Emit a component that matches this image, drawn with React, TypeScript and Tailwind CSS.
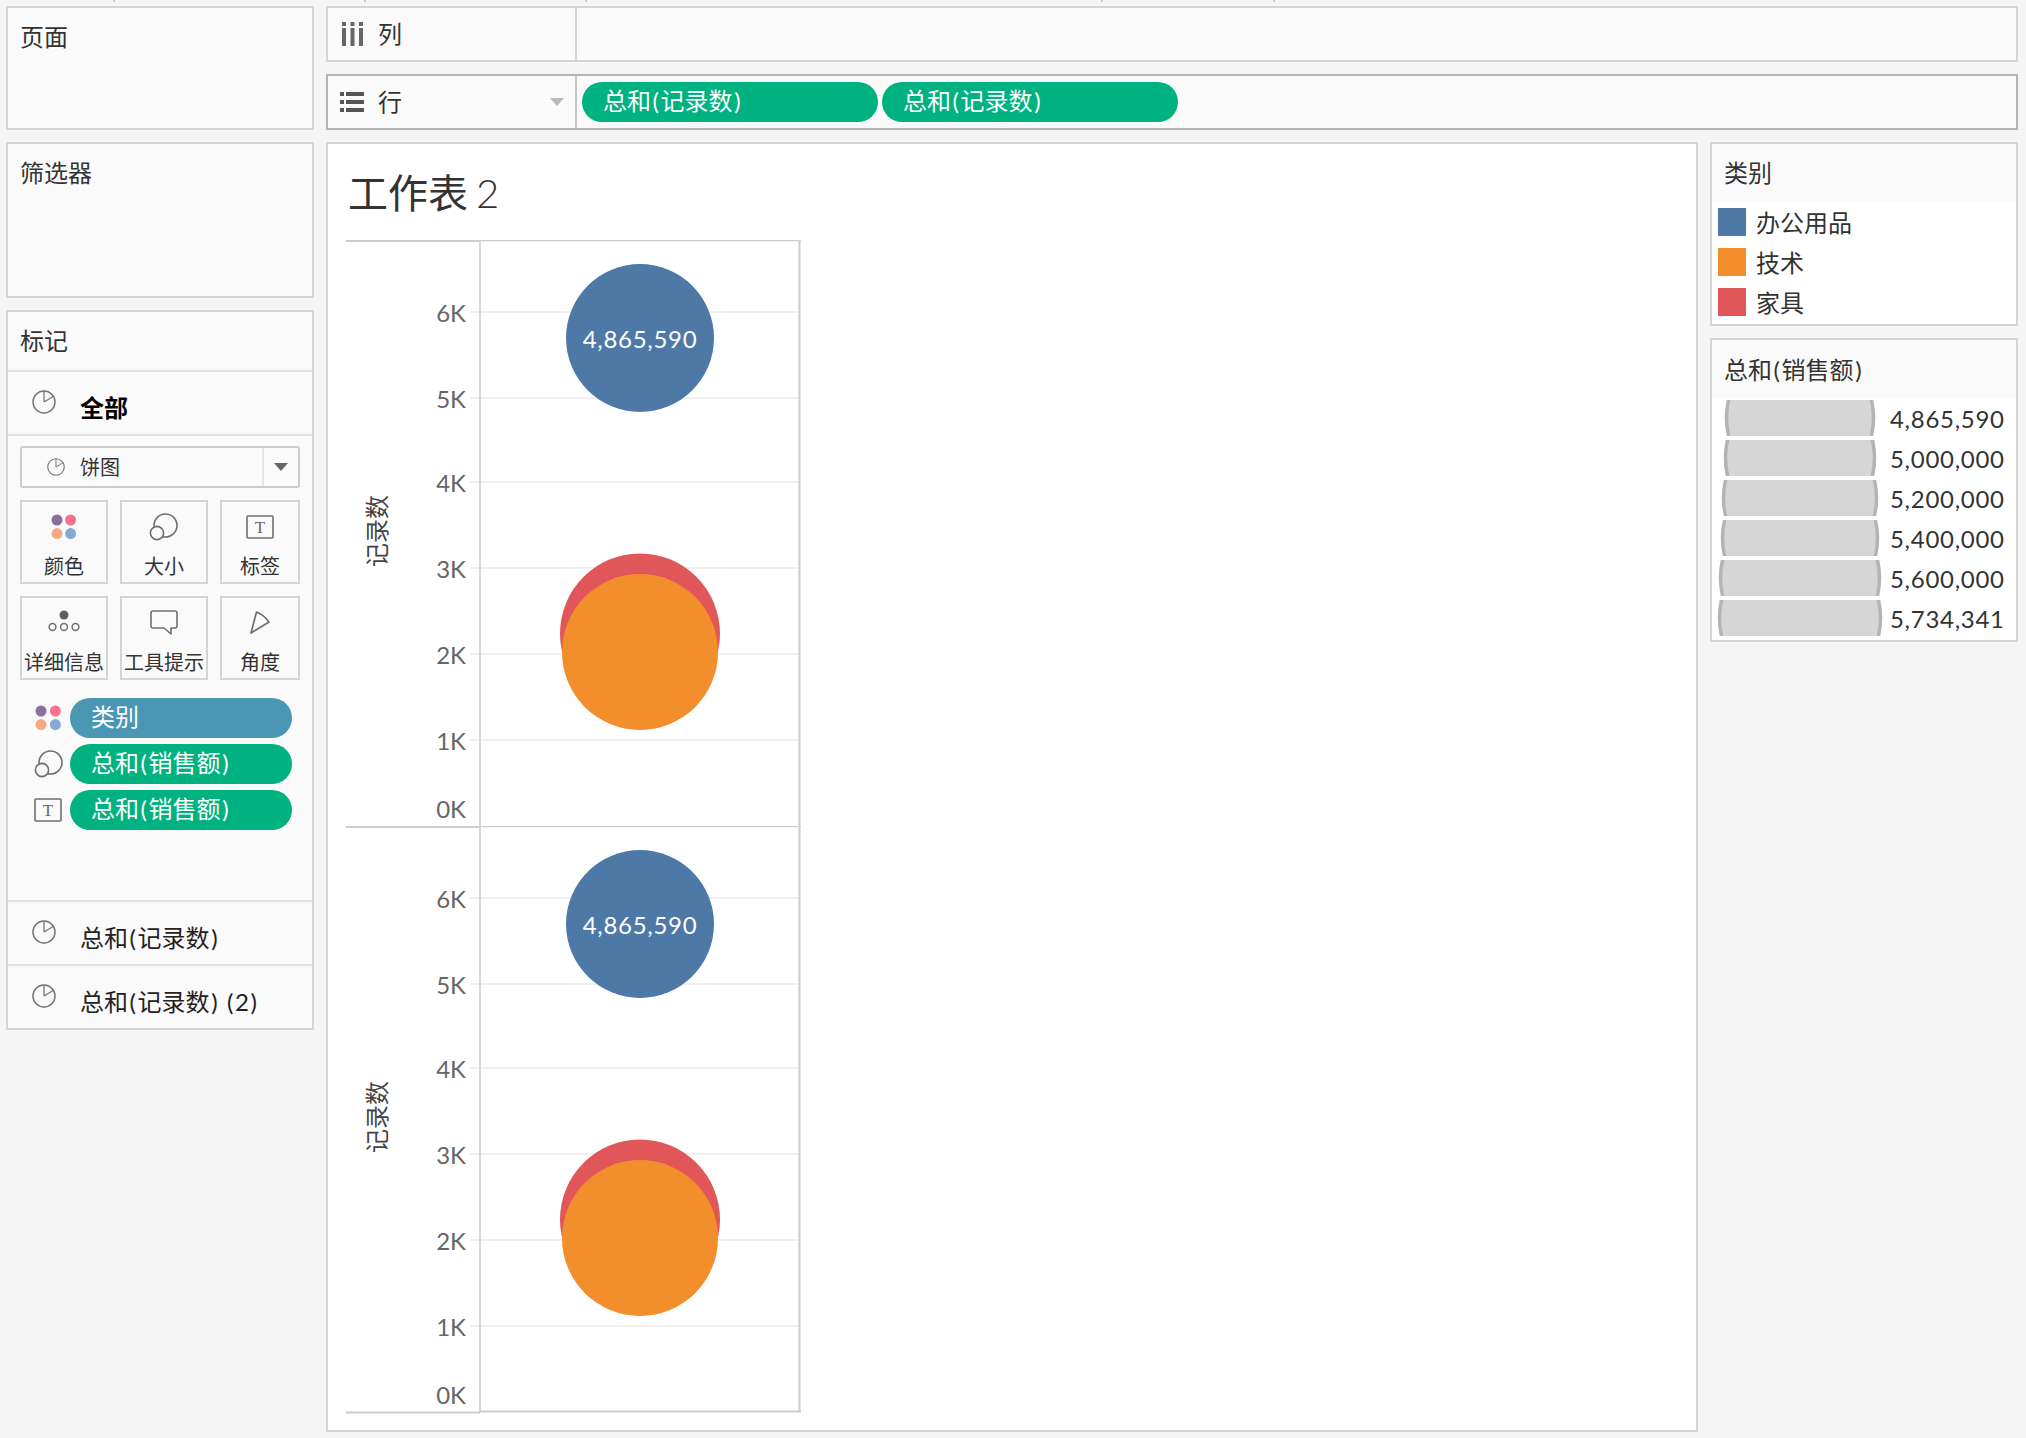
import React from "react";

const FONT = "font-['Lato','Noto_Sans_CJK_SC',sans-serif]";

function Parens({ text }: { text: string }) {
  const parts = text.split(/([()])/);
  return (
    <>
      {parts.map((p, i) =>
        p === "(" || p === ")" ? (
          <span key={i} className="px-[1.6px]">{p}</span>
        ) : (
          <React.Fragment key={i}>{p}</React.Fragment>
        )
      )}
    </>
  );
}

function Pie({ size = 24 }: { size?: number }) {
  return (
    <svg width={size} height={size} viewBox="0 0 24 24" className="shrink-0">
      <circle cx="12" cy="12" r="11" fill="none" stroke="#777" strokeWidth="1.5" />
      <path d="M12 12 L12 1 M12 12 L22 6" fill="none" stroke="#777" strokeWidth="1.3" />
    </svg>
  );
}

function ColorDots({ gap = 13.6 }: { gap?: number }) {
  return (
    <svg width="28" height="26" viewBox="0 0 28 26" className="shrink-0">
      <circle cx="7" cy="6" r="5.5" fill="#8a6f9e" />
      <circle cx={7 + gap} cy="6" r="5.5" fill="#f7728a" />
      <circle cx="7" cy="19.6" r="5.5" fill="#f5a983" />
      <circle cx={7 + gap} cy="19.6" r="5.5" fill="#86a9cf" />
    </svg>
  );
}

function SizeIcon() {
  return (
    <svg width="30" height="28" viewBox="0 0 30 28" className="shrink-0">
      <circle cx="16.5" cy="12.5" r="11.5" fill="none" stroke="#707070" strokeWidth="1.6" />
      <circle cx="8" cy="20" r="6.6" fill="#fafafa" stroke="#707070" strokeWidth="1.6" />
    </svg>
  );
}

function LabelIcon() {
  return (
    <svg width="28" height="24" viewBox="0 0 28 24" className="shrink-0">
      <rect x="1" y="1" width="26" height="22" rx="1" fill="none" stroke="#707070" strokeWidth="1.6" />
      <text x="14" y="18" textAnchor="middle" fontSize="17" fill="#666" fontFamily="'Liberation Serif', serif">T</text>
    </svg>
  );
}

function DetailIcon() {
  return (
    <svg width="32" height="26" viewBox="0 0 32 26" className="shrink-0">
      <circle cx="16" cy="5" r="4.5" fill="#606060" />
      <circle cx="4.5" cy="17" r="3.4" fill="none" stroke="#707070" strokeWidth="1.5" />
      <circle cx="16" cy="17" r="3.4" fill="none" stroke="#707070" strokeWidth="1.5" />
      <circle cx="27.5" cy="17" r="3.4" fill="none" stroke="#707070" strokeWidth="1.5" />
    </svg>
  );
}

function TooltipIcon() {
  return (
    <svg width="28" height="26" viewBox="0 0 28 26" className="shrink-0">
      <path d="M3 1 H25 Q27 1 27 3 V16 Q27 18 25 18 H21 V24 L14 18 H3 Q1 18 1 16 V3 Q1 1 3 1 Z" fill="none" stroke="#707070" strokeWidth="1.6" strokeLinejoin="round" />
    </svg>
  );
}

function AngleIcon() {
  return (
    <svg width="22" height="26" viewBox="0 0 22 26" className="shrink-0">
      <path d="M2 23 L7.5 2 Q15 5 20 12 Z" fill="none" stroke="#707070" strokeWidth="1.7" strokeLinejoin="round" />
    </svg>
  );
}

function Card({ label, children }: { label: string; children: React.ReactNode }) {
  return (
    <div className="h-[84px] flex flex-col items-center border-2 border-[#d4d4d4] overflow-hidden">
      <div className="h-[50px] shrink-0 flex items-center justify-center">{children}</div>
      <div className="mt-[2px] text-[20px] leading-[24px] text-[#333] whitespace-nowrap">{label}</div>
    </div>
  );
}

function MarkRow({ bold, label }: { bold?: boolean; label: string }) {
  return (
    <div className="flex items-start pl-6">
      <div className="mt-[18px]"><Pie /></div>
      <div className={`ml-6 mt-[21px] text-[24px] leading-[30px] whitespace-nowrap ${bold ? "font-bold text-black" : "text-[#222]"}`}><Parens text={label} /></div>
    </div>
  );
}

function Pill({ label, color, width }: { label: string; color: string; width: string }) {
  return (
    <div className={`${color} ${width} h-10 rounded-full pl-[21px] text-white text-[24px] leading-[38px] whitespace-nowrap shrink-0`}><Parens text={label} /></div>
  );
}

function LeftColumn() {
  return (
    <div className="w-[308px] shrink-0 flex flex-col gap-3">
      <div className="h-[124px] border-2 border-[#d4d4d4] bg-[#fafafa] pl-3 pt-[14px] text-[24px] leading-[30px] text-[#333]">页面</div>
      <div className="h-[156px] border-2 border-[#d4d4d4] bg-[#fafafa] pl-3 pt-[14px] text-[24px] leading-[30px] text-[#333]">筛选器</div>
      <div className="h-[720px] border-2 border-[#d4d4d4] bg-[#fafafa] flex flex-col">
        <div className="h-[60px] shrink-0 border-b-2 border-[#e2e2e2] pl-3 pt-[14px] text-[24px] leading-[30px] text-[#333]">标记</div>
        <div className="h-[64px] shrink-0 border-b-2 border-[#e2e2e2]"><MarkRow bold label="全部" /></div>
        <div className="h-[42px] mt-[10px] mx-3 w-[280px] shrink-0 border-2 border-[#ccc] rounded-[3px] flex items-center">
          <div className="ml-[25px]"><Pie size={18} /></div>
          <div className="ml-[15px] text-[20px] leading-[24px] text-[#333] flex-1">饼图</div>
          <div className="w-[36px] h-full border-l-2 border-[#e4e4e4] flex items-center justify-center">
            <div className="w-0 h-0 border-l-[7.5px] border-r-[7.5px] border-t-[8px] border-l-transparent border-r-transparent border-t-[#666]" />
          </div>
        </div>
        <div className="mt-3 mx-3 grid grid-cols-[88px_88px_80px] gap-3 shrink-0">
          <Card label="颜色"><ColorDots /></Card>
          <Card label="大小"><SizeIcon /></Card>
          <Card label="标签"><LabelIcon /></Card>
          <Card label="详细信息"><DetailIcon /></Card>
          <Card label="工具提示"><TooltipIcon /></Card>
          <Card label="角度"><AngleIcon /></Card>
        </div>
        <div className="mt-[18px] flex flex-col gap-[6px] pl-[26px] shrink-0">
          <div className="flex items-center">
            <div className="w-[36px]"><ColorDots gap={14.4} /></div>
            <Pill label="类别" color="bg-[#4a96b3]" width="w-[222px]" />
          </div>
          <div className="flex items-center">
            <div className="w-[36px]"><SizeIcon /></div>
            <Pill label="总和(销售额)" color="bg-[#00b280]" width="w-[222px]" />
          </div>
          <div className="flex items-center">
            <div className="w-[36px]"><LabelIcon /></div>
            <Pill label="总和(销售额)" color="bg-[#00b280]" width="w-[222px]" />
          </div>
        </div>
        <div className="flex-1" />
        <div className="h-[64px] shrink-0 border-t-2 border-[#e2e2e2]"><MarkRow label="总和(记录数)" /></div>
        <div className="h-[64px] shrink-0 border-t-2 border-[#e2e2e2]"><MarkRow label="总和(记录数) (2)" /></div>
      </div>
    </div>
  );
}

function ColumnsIcon() {
  return (
    <svg width="22" height="24" viewBox="0 0 22 24" className="shrink-0" fill="#666">
      <rect x="0" y="0" width="4" height="4" />
      <rect x="0" y="6" width="4" height="18" />
      <rect x="8.5" y="0" width="4" height="4" />
      <rect x="8.5" y="6" width="4" height="18" />
      <rect x="17" y="0" width="4" height="4" />
      <rect x="17" y="6" width="4" height="18" />
    </svg>
  );
}

function RowsIcon() {
  return (
    <svg width="24" height="20" viewBox="0 0 24 20" className="shrink-0" fill="#555">
      <rect x="0" y="0" width="4" height="4" />
      <rect x="6" y="0" width="18" height="4" />
      <rect x="0" y="8" width="4" height="4" />
      <rect x="6" y="8" width="18" height="4" />
      <rect x="0" y="16" width="4" height="4" />
      <rect x="6" y="16" width="18" height="4" />
    </svg>
  );
}

function Shelves() {
  return (
    <div className="flex flex-col gap-3 shrink-0">
      <div className="h-14 border-2 border-[#d4d4d4] bg-[#fafafa] flex">
        <div className="w-[249px] border-r-2 border-[#d4d4d4] flex items-center pl-[14px] relative">
          <ColumnsIcon />
          <span className="ml-[14px] text-[24px] leading-[30px] text-[#333]">列</span>
        </div>
      </div>
      <div className="h-14 border-2 border-[#b4b4b4] bg-[#fafafa] flex">
        <div className="w-[249px] shrink-0 border-r-2 border-[#c4c4c4] flex items-center pl-3">
          <RowsIcon />
          <span className="ml-[14px] text-[24px] leading-[30px] text-[#333]">行</span>
          <div className="ml-[148px] w-0 h-0 border-l-[7px] border-r-[7px] border-t-[8px] border-l-transparent border-r-transparent border-t-[#bbb]" />
        </div>
        <div className="flex items-center gap-1 pl-[5px]">
          <Pill label="总和(记录数)" color="bg-[#00b280]" width="w-[296px]" />
          <Pill label="总和(记录数)" color="bg-[#00b280]" width="w-[296px]" />
        </div>
      </div>
    </div>
  );
}

const TICKS: [string, number][] = [
  ["6K", 72],
  ["5K", 158],
  ["4K", 242],
  ["3K", 328],
  ["2K", 414],
  ["1K", 500],
];

function ChartPanel({ last }: { last?: boolean }) {
  const h = last ? 588 : 586;
  return (
    <svg width="456" height={h} viewBox={`0 0 456 ${h}`} className="block">
      {TICKS.map(([t, y]) => (
        <line key={t} x1="124" x2="453" y1={y} y2={y} stroke="#f0f0f0" strokeWidth="2" />
      ))}
      <line x1="0" x2="134" y1="1" y2="1" stroke="#cccccc" strokeWidth="2" />
      <line x1="134" x2="455" y1="0.5" y2="0.5" stroke="#cccccc" strokeWidth="1.5" />
      <line x1="134" x2="134" y1="0" y2="586" stroke="#cccccc" strokeWidth="1.5" />
      <line x1="453.5" x2="453.5" y1="0" y2="586" stroke="#cccccc" strokeWidth="2" />
      {last && <line x1="0" x2="134" y1="586.5" y2="586.5" stroke="#cccccc" strokeWidth="2" />}
      {last && <line x1="134" x2="455" y1="585.5" y2="585.5" stroke="#cccccc" strokeWidth="2" />}
      {TICKS.map(([t, y]) => (
        <text key={t} x="120" y={y + 10} textAnchor="end" fontSize="24" fill="#666">{t}</text>
      ))}
      <text x="120" y="578" textAnchor="end" fontSize="24" fill="#666">0K</text>
      <text transform="translate(40 291) rotate(-90)" textAnchor="middle" fontSize="24" fill="#444">记录数</text>
      <circle cx="294" cy="98" r="74" fill="#4e79a7" />
      <text x="294" y="108" textAnchor="middle" fontSize="24" fill="#fff" className="tracking-[0.7px]">4,865,590</text>
      <circle cx="294" cy="393.5" r="80" fill="#e15759" />
      <circle cx="294" cy="412" r="78" fill="#f38e2c" />
    </svg>
  );
}

function Canvas() {
  return (
    <div className="w-[1372px] shrink-0 border-2 border-[#d4d4d4] bg-white flex flex-col pl-[18px]">
      <div className="h-[96px] shrink-0 pl-[2px] pt-6 text-[40px] leading-[50px] text-[#333] whitespace-nowrap">工作表<span className="ml-2 font-light">2</span></div>
      <ChartPanel />
      <ChartPanel last />
    </div>
  );
}

function SizeMark({ r }: { r: number }) {
  return (
    <svg width="168" height="36" viewBox="-84 -18 168 36" className="block shrink-0">
      <circle cx="0" cy="0" r={r} fill="#d6d6d6" stroke="#b4b4b4" strokeWidth="3.5" />
    </svg>
  );
}

function Legends() {
  const cats: [string, string][] = [["办公用品", "bg-[#4e79a7]"], ["技术", "bg-[#f38e2c]"], ["家具", "bg-[#e15759]"]];
  const sizes: [string, number][] = [["4,865,590", 73.5], ["5,000,000", 74.5], ["5,200,000", 76.5], ["5,400,000", 77.5], ["5,600,000", 79.5], ["5,734,341", 80.5]];
  return (
    <div className="flex-1 flex flex-col gap-3">
      <div className="h-[184px] border-2 border-[#d4d4d4] bg-white flex flex-col">
        <div className="h-[58px] shrink-0 bg-[#fafafa] pl-3 pt-[14px] text-[24px] leading-[30px] text-[#333]">类别</div>
        <div className="flex flex-col gap-3 pt-[6px] pl-[6px]">
          {cats.map(([t, c]) => (
            <div key={t} className="flex items-center h-[28px]">
              <div className={`${c} w-[28px] h-[28px] shrink-0`} />
              <span className="ml-[10px] mt-[2px] text-[24px] leading-[30px] text-[#333]">{t}</span>
            </div>
          ))}
        </div>
      </div>
      <div className="h-[304px] border-2 border-[#d4d4d4] bg-white flex flex-col">
        <div className="h-[58px] shrink-0 bg-[#fafafa] pl-3 pt-[15px] text-[24px] leading-[30px] text-[#333] whitespace-nowrap"><Parens text="总和(销售额)" /></div>
        <div className="flex flex-col gap-1 pt-[2px]">
          {sizes.map(([t, r]) => (
            <div key={t} className="flex items-center h-[36px] pl-1">
              <SizeMark r={r} />
              <span className="ml-[6px] mt-[2px] text-[24px] leading-[30px] text-[#333] whitespace-nowrap tracking-[0.7px]">{t}</span>
            </div>
          ))}
        </div>
      </div>
    </div>
  );
}

export default function App() {
  return (
    <div className={`${FONT} relative w-[2026px] h-[1438px] bg-[#f5f5f5] pt-[6px] pl-[6px] pr-2 pb-[6px] flex gap-3 overflow-hidden`}>
      <div className="absolute top-0 left-[113px] w-[2px] h-[2px] bg-[#c8c8c8]" />
      <div className="absolute top-0 left-[364px] w-[2px] h-[2px] bg-[#c8c8c8]" />
      <div className="absolute top-0 left-[585px] w-[2px] h-[2px] bg-[#c8c8c8]" />
      <div className="absolute top-0 left-[1101px] w-[2px] h-[2px] bg-[#c8c8c8]" />
      <div className="absolute top-0 left-[1273px] w-[2px] h-[2px] bg-[#c8c8c8]" />
      <LeftColumn />
      <div className="flex-1 flex flex-col gap-3 min-w-0">
        <Shelves />
        <div className="flex-1 flex gap-3 min-h-0">
          <Canvas />
          <Legends />
        </div>
      </div>
    </div>
  );
}
